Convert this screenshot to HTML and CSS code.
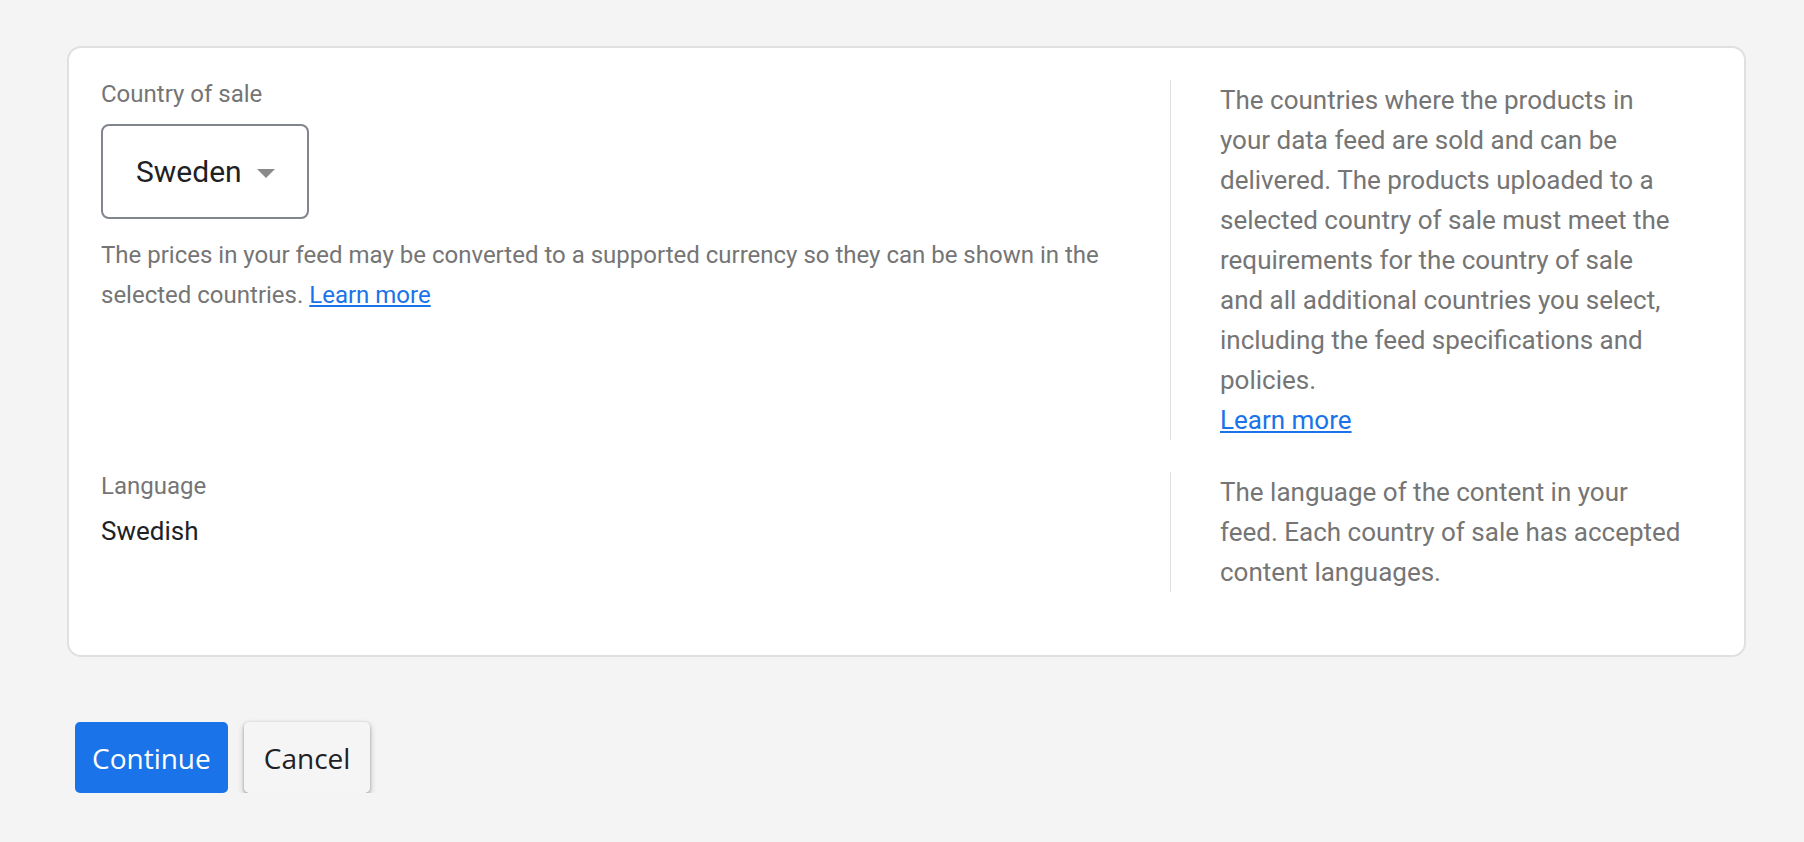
FILE: index.html
```html
<!DOCTYPE html>
<html lang="en">
<head>
<meta charset="utf-8">
<title>Country of sale</title>
<link rel="stylesheet" href="styles.css">
</head>
<body>
<div class="page">
  <section class="card">
    <div class="row">
      <div class="field">
        <div class="label">Country of sale</div>
        <div class="select">
          <span class="select-value">Sweden</span>
          <span class="caret"></span>
        </div>
        <p class="helper">The prices in your feed may be converted to a supported currency so they can be shown in the selected countries. <a href="#" class="link">Learn more</a></p>
      </div>
      <div class="aside">
        <p class="aside-text aside-text-narrow">The countries where the products in your data feed are sold and can be delivered. The products uploaded to a selected country of sale must meet the requirements for the country of sale and all additional countries you select, including the feed specifications and policies.</p>
        <a href="#" class="link aside-link">Learn more</a>
      </div>
    </div>
    <div class="row">
      <div class="field">
        <div class="label">Language</div>
        <div class="value">Swedish</div>
      </div>
      <div class="aside">
        <p class="aside-text">The language of the content in your feed. Each country of sale has accepted content languages.</p>
      </div>
    </div>
  </section>
  <div class="actions">
    <button class="btn btn-primary">Continue</button>
    <button class="btn btn-secondary">Cancel</button>
  </div>
</div>
</body>
</html>
```

FILE: styles.css
```css
html, body {
  margin: 0;
  padding: 0;
  background: #f4f4f4;
}

body {
  font-family: Roboto, "Liberation Sans", Arial, sans-serif;
  color: #202124;
}

.page {
  padding: 46px 58px 0 67px;
}

.card {
  background: #ffffff;
  border: 2px solid #e0e0e0;
  border-radius: 14px;
  padding: 32px 58px 31px 32px;
}

.row {
  display: grid;
  grid-template-columns: 1fr 516px;
  column-gap: 48px;
  margin-bottom: 32px;
}

.field {
  display: flex;
  flex-direction: column;
  align-items: flex-start;
}

.label {
  font-size: 24px;
  line-height: 28px;
  color: #757575;
}

.select {
  margin-top: 16px;
  height: 95px;
  box-sizing: border-box;
  display: inline-flex;
  align-items: center;
  border: 2px solid #80868b;
  border-radius: 8px;
  padding: 0 32px 0 33px;
}

.select-value {
  font-size: 30px;
  line-height: 35px;
  color: #202124;
}

.caret {
  width: 0;
  height: 0;
  margin-left: 15px;
  margin-top: 3px;
  border-left: 9.5px solid transparent;
  border-right: 9.5px solid transparent;
  border-top: 9px solid #8a8a8a;
}

.helper {
  margin: 16px 0 0;
  font-size: 24px;
  line-height: 40px;
  color: #757575;
}

.link {
  color: #1a73e8;
  text-decoration: underline;
}

.value {
  margin-top: 16px;
  font-size: 26px;
  line-height: 30px;
  color: #202124;
}

.aside {
  border-left: 1px solid #e0e0e0;
  padding-left: 49px;
  font-size: 26px;
  line-height: 40px;
  color: #757575;
}

.aside-text {
  margin: 0;
}

.aside-text-narrow {
  max-width: 460px;
}

.aside-link {
  display: inline-block;
}

.actions {
  display: flex;
  gap: 16px;
  margin-top: 65px;
  padding-left: 8px;
}

.btn {
  height: 71px;
  border: none;
  border-radius: 5px;
  font-family: "Open Sans", Roboto, sans-serif;
  font-size: 28px;
  font-weight: 500;
  cursor: pointer;
}

.btn-primary {
  background: #1a73e8;
  color: #ffffff;
  padding: 0 17px;
}

.btn-secondary {
  background: #f5f5f5;
  color: #202124;
  padding: 0 20px;
  box-shadow: 0 1px 3px rgba(0, 0, 0, 0.3), 0 3px 6px 1px rgba(0, 0, 0, 0.15);
}
```
